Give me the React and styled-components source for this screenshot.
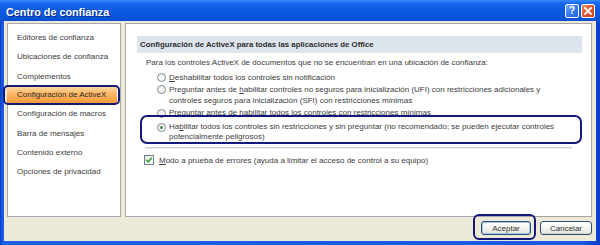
import React from 'react';
import styled, { createGlobalStyle } from 'styled-components';

const Global = createGlobalStyle`
  html, body { margin: 0; padding: 0; background: #ffffff; }
  body { font-family: "Liberation Sans", Arial, sans-serif; }
  #root { width: 600px; height: 245px; }
`;

const Window = styled.div`
  width: 600px;
  height: 245px;
  box-sizing: border-box;
  display: flex;
  flex-direction: column;
  background: linear-gradient(90deg, #0A3FC8 0px, #1F5FE6 3px, #1A58E2 97%, #0A3FC8 100%);
  overflow: hidden;
`;

const TitleBar = styled.div`
  height: 21px;
  flex: none;
  display: flex;
  align-items: center;
  padding: 0 5px 0 6px;
  background: linear-gradient(180deg, #3A8AF6 0px, #1A6AF0 3px, #0C5CE4 8px, #0A56DC 16px, #0A4FD2 21px);
`;

const Title = styled.div`
  flex: 1;
  color: #ffffff;
  font-weight: bold;
  font-size: 10.8px;
  text-shadow: 1px 1px 0 #0A2F8A;
  padding-top: 2px;
`;

const CaptionButton = styled.div`
  width: 14px;
  height: 14px;
  box-sizing: border-box;
  margin-left: 2px;
  margin-top: 1px;
  border: 1px solid #ffffff;
  border-radius: 2px;
  display: flex;
  align-items: center;
  justify-content: center;
  color: #ffffff;
  font-weight: bold;
  font-size: 10px;
  line-height: 1;
  background: ${p => p.$close
    ? 'linear-gradient(135deg, #F0906A 0%, #E0572C 45%, #C8411C 100%)'
    : 'linear-gradient(135deg, #7FB0FF 0%, #3A7CF0 45%, #2660DA 100%)'};
`;

const Client = styled.div`
  flex: 1;
  margin: 0 4px 4px 4px;
  background: #ECE9D8;
  display: flex;
  flex-direction: column;
  padding: 2px 4px 0 3px;
`;

const Main = styled.div`
  display: flex;
  gap: 4px;
  height: 194px;
`;

const LeftPanel = styled.div`
  width: 114px;
  box-sizing: border-box;
  background: #ffffff;
  border: 1px solid #A7A6AA;
  padding-top: 4px;
  display: flex;
  flex-direction: column;
`;

const NavItem = styled.div`
  position: relative;
  height: 19.4px;
  line-height: 19.4px;
  padding-left: 9px;
  font-size: 8px;
  color: #3c3c3c;
  white-space: nowrap;
  ${p => p.$active && `
    color: #2a2a2a;
    background: linear-gradient(180deg, #FFD9A0 0%, #FDB865 40%, #F79A3A 100%);
    margin: 1px 3px 1px -1px;
    height: 16px;
    line-height: 16px;
    padding-left: 10px;
  `}
`;

const Annotation = styled.div`
  position: absolute;
  border: 2px solid #13197A;
  border-radius: ${p => p.$r || 5}px;
  pointer-events: none;
`;

const RightPanel = styled.div`
  flex: 1;
  box-sizing: border-box;
  background: #ffffff;
  border: 1px solid #A7A6AA;
  padding: 12px 9px 0 11px;
  display: flex;
  flex-direction: column;
`;

const SectionHeader = styled.div`
  height: 17px;
  line-height: 17px;
  background: #DEE4EC;
  padding-left: 3px;
  font-size: 7.8px;
  font-weight: bold;
  color: #2e2e2e;
`;

const Description = styled.div`
  margin-top: 4px;
  padding-left: 9px;
  font-size: 8px;
  line-height: 12px;
  color: #3c3c3c;
`;

const Options = styled.div`
  display: flex;
  flex-direction: column;
  margin-top: 3px;
  padding-left: 20px;
`;

const OptionRow = styled.div`
  position: relative;
  display: flex;
  align-items: flex-start;
  gap: 3px;
  margin-top: ${p => p.$mt || 0}px;
`;

const Radio = styled.span`
  flex: none;
  width: 9px;
  height: 9px;
  box-sizing: border-box;
  margin-top: ${p => p.$mt ?? 1.4}px;
  border-radius: 50%;
  border: 1px solid #7C8C9C;
  background: radial-gradient(circle at 60% 60%, #ffffff 0%, #F2F2EE 60%, #DAD9D2 100%);
  display: flex;
  align-items: center;
  justify-content: center;
  &::after {
    content: '';
    display: ${p => (p.$checked ? 'block' : 'none')};
    width: 3px;
    height: 3px;
    border-radius: 50%;
    background: #3F8E3F;
  }
`;

const OptionText = styled.div`
  font-size: 8px;
  line-height: ${p => p.$lh || 11.7}px;
  color: #3c3c3c;
`;

const Separator = styled.div`
  margin: 5px 10px 0 8px;
  height: 1px;
  background: #C9CCD0;
  border-bottom: 1px solid #EDEDED;
`;

const CheckRow = styled.div`
  display: flex;
  align-items: center;
  gap: 5px;
  margin-top: 6px;
  padding-left: 7px;
  font-size: 8px;
  color: #3c3c3c;
`;

const CheckBox = styled.span`
  width: 10px;
  height: 10px;
  box-sizing: border-box;
  border: 1px solid #6F8295;
  background: linear-gradient(135deg, #E8E8E2 0%, #ffffff 100%);
  display: flex;
  align-items: center;
  justify-content: center;
`;

const Footer = styled.div`
  display: flex;
  justify-content: flex-end;
  gap: 9px;
  padding-top: 4px;
`;

const ButtonWrap = styled.div`
  position: relative;
`;

const Button = styled.div`
  width: ${p => p.$w}px;
  height: 14px;
  box-sizing: border-box;
  border: 1px solid #2F4F76;
  border-radius: 3px;
  background: linear-gradient(180deg, #ffffff 0%, #F4F4F0 50%, #E2E1D9 100%);
  box-shadow: ${p => (p.$default ? 'inset 0 0 0 1px #A6C4F0' : 'inset 0 -1px 0 #D6D0C5')};
  display: flex;
  align-items: center;
  justify-content: center;
  font-size: 8px;
  color: #333333;
`;

export default function App() {
  const nav = [
    'Editores de confianza',
    'Ubicaciones de confianza',
    'Complementos',
    'Configuración de ActiveX',
    'Configuración de macros',
    'Barra de mensajes',
    'Contenido externo',
    'Opciones de privacidad',
  ];
  return (
    <>
      <Global />
      <Window>
        <TitleBar>
          <Title>Centro de confianza</Title>
          <CaptionButton>?</CaptionButton>
          <CaptionButton $close>
            <svg width="8" height="8" viewBox="0 0 8 8">
              <path d="M1 1 L7 7 M7 1 L1 7" stroke="#fff" strokeWidth="1.8" strokeLinecap="square" />
            </svg>
          </CaptionButton>
        </TitleBar>
        <Client>
          <Main>
            <LeftPanel>
              {nav.map((n, i) => (
                <NavItem key={n} $active={i === 3}>
                  {n}
                  {i === 3 && <Annotation style={{ left: -4, right: -3, top: -2, bottom: -2 }} />}
                </NavItem>
              ))}
            </LeftPanel>
            <RightPanel>
              <SectionHeader>Configuración de ActiveX para todas las aplicaciones de Office</SectionHeader>
              <Description>Para los controles ActiveX de documentos que no se encuentran en una ubicación de confianza:</Description>
              <Options>
                <OptionRow>
                  <Radio />
                  <OptionText><u>D</u>eshabilitar todos los controles sin notificación</OptionText>
                </OptionRow>
                <OptionRow>
                  <Radio />
                  <OptionText>
                    Preguntar antes de <u>h</u>abilitar controles no seguros para inicialización (UFI) con restricciones adicionales y<br />
                    controles seguros para inicialización (SFI) con restricciones mínimas
                  </OptionText>
                </OptionRow>
                <OptionRow>
                  <Radio />
                  <OptionText>Preguntar antes de habilitar todos los controles con restricciones mínimas</OptionText>
                </OptionRow>
                <OptionRow $mt={3.3}>
                  <Radio $checked $mt={0.5} />
                  <OptionText $lh={10}>
                    Ha<u>b</u>ilitar todos los controles sin restricciones y sin preguntar (no recomendado; se pueden ejecutar controles<br />
                    potencialmente peligrosos)
                  </OptionText>
                  <Annotation $r={7} style={{ left: -17, right: 0, top: -7, bottom: -2 }} />
                </OptionRow>
              </Options>
              <Separator />
              <CheckRow>
                <CheckBox>
                  <svg width="8" height="8" viewBox="0 0 8 8">
                    <path d="M1.2 3.8 L3.2 5.8 L6.8 1.8" stroke="#2FA32F" strokeWidth="1.5" fill="none" />
                  </svg>
                </CheckBox>
                <span><u>M</u>odo a prueba de errores (ayuda a limitar el acceso de control a su equipo)</span>
              </CheckRow>
            </RightPanel>
          </Main>
          <Footer>
            <ButtonWrap>
              <Button $w={50} $default>Aceptar</Button>
              <Annotation $r={6} style={{ left: -8, right: -5, top: -7, bottom: -5 }} />
            </ButtonWrap>
            <ButtonWrap>
              <Button $w={52}>Cancelar</Button>
            </ButtonWrap>
          </Footer>
        </Client>
      </Window>
    </>
  );
}
